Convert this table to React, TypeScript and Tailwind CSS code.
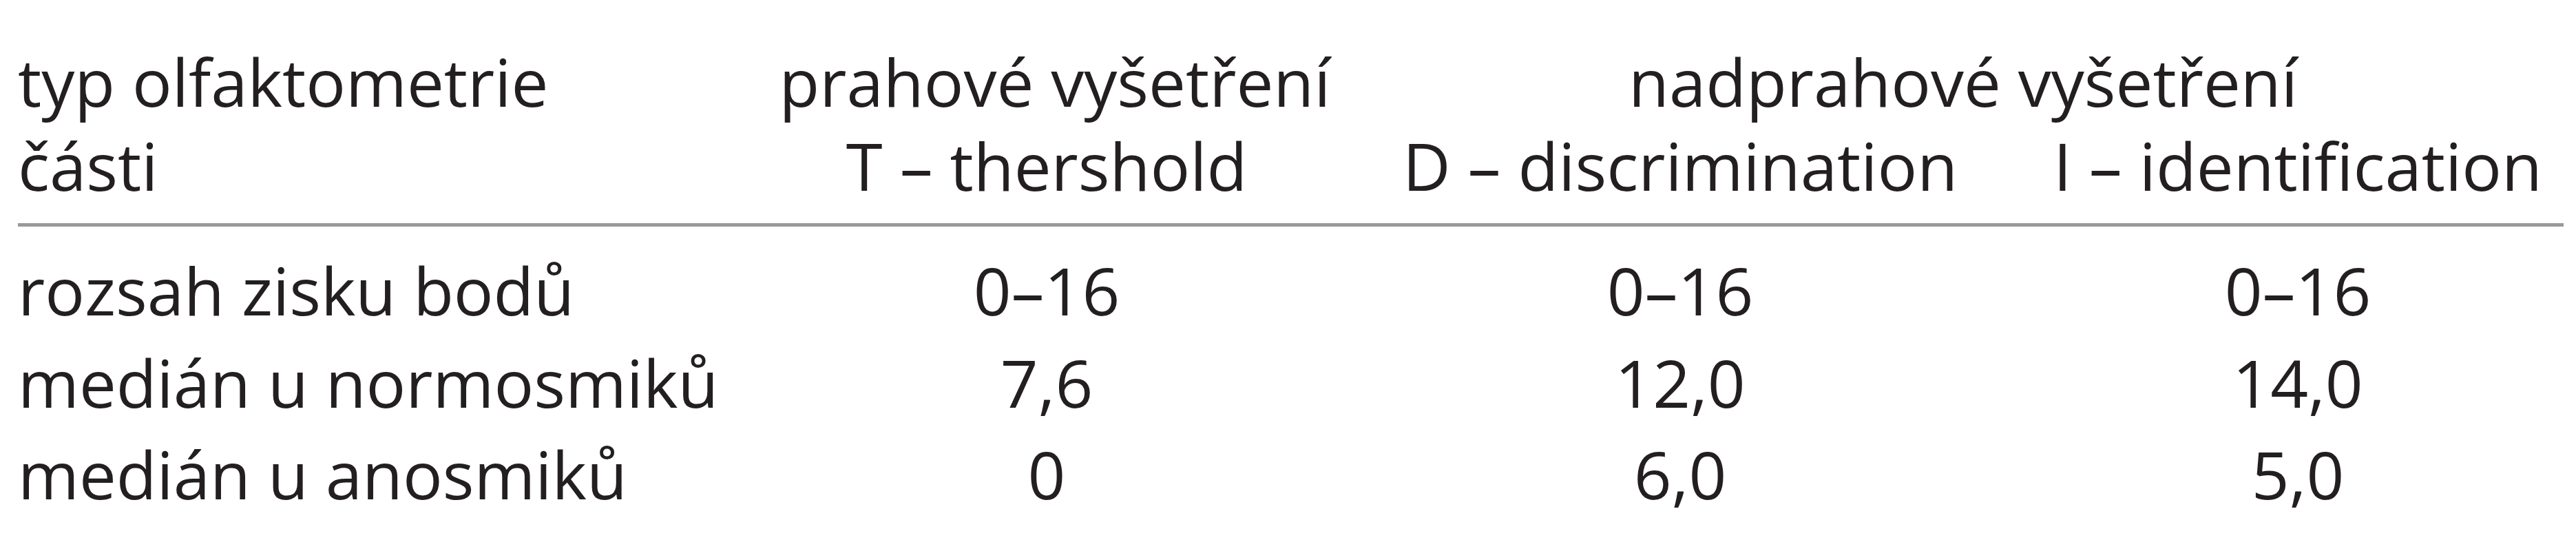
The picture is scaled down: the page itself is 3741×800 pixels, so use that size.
const ROWS = [
  { label: 'rozsah zisku bodů', t: '0–16', d: '0–16', i: '0–16' },
  { label: 'medián u normosmiků', t: '7,6', d: '12,0', i: '14,0' },
  { label: 'medián u anosmiků', t: '0', d: '6,0', i: '5,0' },
];

const COLS = 'grid grid-cols-[1074px_840px_1000px_794px]';

export default function App() {
  return (
    <div
      className="h-[800px] w-[3741px] bg-white pl-[26px] pt-[57px] text-[96px] text-[#231f20]"
      style={{ fontFamily: '"Open Sans", "Noto Sans", sans-serif' }}
    >
      {/* Header */}
      <div className={`${COLS} leading-[122px] whitespace-nowrap`}>
        <div>typ olfaktometrie</div>
        <div className="pl-[24px] text-center">prahové vyšetření</div>
        <div className="col-span-2 pl-[28px] text-center">nadprahové vyšetření</div>

        <div>části</div>
        <div className="text-center">T – thershold</div>
        <div className="text-center">D – discrimination</div>
        <div className="text-center">I – identification</div>
      </div>

      <div className="mt-[23px] h-[5px] w-[3697px] bg-[#999999]" />

      {/* Body */}
      <div className={`${COLS} mt-[25px] leading-[133.5px] whitespace-nowrap`}>
        {ROWS.map((row) => (
          <div key={row.label} className="contents">
            <div>{row.label}</div>
            <div className="text-center">{row.t}</div>
            <div className="text-center">{row.d}</div>
            <div className="text-center">{row.i}</div>
          </div>
        ))}
      </div>
    </div>
  );
}
